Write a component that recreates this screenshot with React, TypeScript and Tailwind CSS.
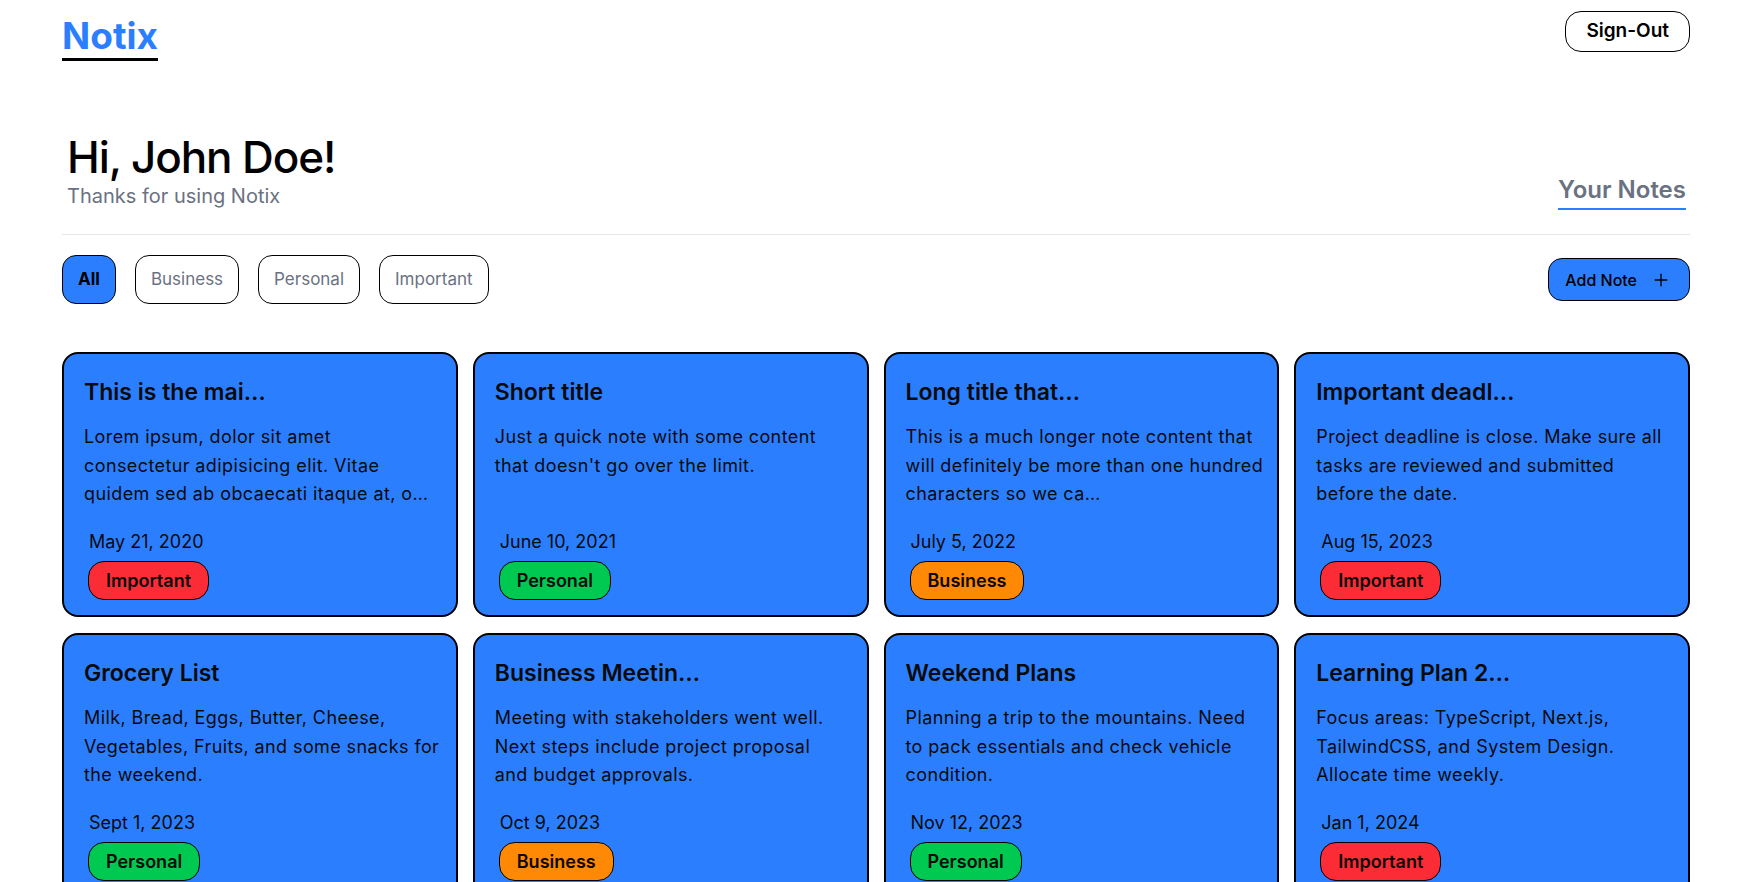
import { Plus } from "lucide-react";

type Tag = "Important" | "Personal" | "Business";

interface Note {
  title: string;
  lines: string[];
  date: string;
  tag: Tag;
}

// body text is cut to ~100 chars upstream, lines kept as they wrap on the card
const notes: Note[] = [
  {
    title: "This is the mai…",
    lines: ["Lorem ipsum, dolor sit amet", "consectetur adipisicing elit. Vitae", "quidem sed ab obcaecati itaque at, o…"],
    date: "May 21, 2020",
    tag: "Important",
  },
  {
    title: "Short title",
    lines: ["Just a quick note with some content", "that doesn't go over the limit."],
    date: "June 10, 2021",
    tag: "Personal",
  },
  {
    title: "Long title that…",
    lines: ["This is a much longer note content that", "will definitely be more than one hundred", "characters so we ca…"],
    date: "July 5, 2022",
    tag: "Business",
  },
  {
    title: "Important deadl…",
    lines: ["Project deadline is close. Make sure all", "tasks are reviewed and submitted", "before the date."],
    date: "Aug 15, 2023",
    tag: "Important",
  },
  {
    title: "Grocery List",
    lines: ["Milk, Bread, Eggs, Butter, Cheese,", "Vegetables, Fruits, and some snacks for", "the weekend."],
    date: "Sept 1, 2023",
    tag: "Personal",
  },
  {
    title: "Business Meetin…",
    lines: ["Meeting with stakeholders went well.", "Next steps include project proposal", "and budget approvals."],
    date: "Oct 9, 2023",
    tag: "Business",
  },
  {
    title: "Weekend Plans",
    lines: ["Planning a trip to the mountains. Need", "to pack essentials and check vehicle", "condition."],
    date: "Nov 12, 2023",
    tag: "Personal",
  },
  {
    title: "Learning Plan 2…",
    lines: ["Focus areas: TypeScript, Next.js,", "TailwindCSS, and System Design.", "Allocate time weekly."],
    date: "Jan 1, 2024",
    tag: "Important",
  },
];

const tagColor: Record<Tag, string> = {
  Important: "bg-red-500",
  Personal: "bg-green-500",
  Business: "bg-orange-400",
};

function NoteCard({ note }: { note: Note }) {
  return (
    <div className="flex h-[265px] flex-col rounded-2xl border-2 border-black bg-blue-500 px-[20px] pt-[22px] pb-[13px] text-[#0a0a0a]">
      <h3 className="text-[23px] leading-8 font-semibold">{note.title}</h3>
      <p className="mt-[15px] h-[85px] text-[18px] leading-[28.5px] tracking-[0.4px] whitespace-nowrap">
        {note.lines.map((l) => (
          <span key={l} className="block">
            {l}
          </span>
        ))}
      </p>
      <p className="mt-[20px] pl-[5px] text-[18px] leading-7">{note.date}</p>
      <div className="mt-[5px] flex">
        <span
          className={`ml-[4px] flex h-[39px] items-center rounded-2xl border border-black px-[17px] text-[18px] font-semibold ${tagColor[note.tag]}`}
        >
          {note.tag}
        </span>
      </div>
    </div>
  );
}

export default function App() {
  const filters = ["All", "Business", "Personal", "Important"];

  return (
    <div
      className="min-h-screen overflow-hidden bg-white pr-[56px] pl-[62px] text-black"
      style={{ fontFamily: "Inter, 'Noto Sans', sans-serif" }}
    >
      <header className="flex items-start justify-between pt-[11px]">
        <div className="mt-[5px] border-b-[3px] border-black pb-[2px]">
          <span className="block text-[37px] leading-10 font-bold text-blue-500">Notix</span>
        </div>
        <button className="h-[41px] rounded-2xl border border-black px-[20px] text-[19px] font-semibold">
          Sign-Out
        </button>
      </header>

      <section className="mt-[74px] flex items-end justify-between pr-[4px]">
        <div className="pl-[5px]">
          <h1 className="text-[44px] leading-[45px] font-medium tracking-tight">Hi, John Doe!</h1>
          <p className="mt-[2px] text-[20px] leading-7 text-gray-500">Thanks for using Notix</p>
        </div>
        <div className="border-b-2 border-blue-500 pb-[2px]">
          <span className="block text-[24px] leading-8 font-semibold text-gray-500">Your Notes</span>
        </div>
      </section>

      <hr className="mt-[24px] border-gray-200" />

      <div className="mt-[20px] flex items-center justify-between">
        <div className="flex gap-[19px]">
          {filters.map((f) =>
            f === "All" ? (
              <button
                key={f}
                className="h-[49px] rounded-[14px] border border-black bg-blue-500 px-[15px] text-[17px] font-bold text-black"
              >
                {f}
              </button>
            ) : (
              <button
                key={f}
                className="h-[49px] rounded-[14px] border border-black bg-white px-[15px] text-[17px] text-gray-500"
              >
                {f}
              </button>
            )
          )}
        </div>
        <button className="flex h-[43px] items-center gap-[14px] rounded-[14px] border border-black bg-blue-500 pr-[18px] pl-[16px] text-[16px] font-medium">
          Add Note
          <Plus size={20} strokeWidth={1.6} />
        </button>
      </div>

      <div className="mt-[48px] grid grid-cols-4 gap-x-[15px] gap-y-[16px]">
        {notes.map((n) => (
          <NoteCard key={n.title} note={n} />
        ))}
      </div>
    </div>
  );
}
